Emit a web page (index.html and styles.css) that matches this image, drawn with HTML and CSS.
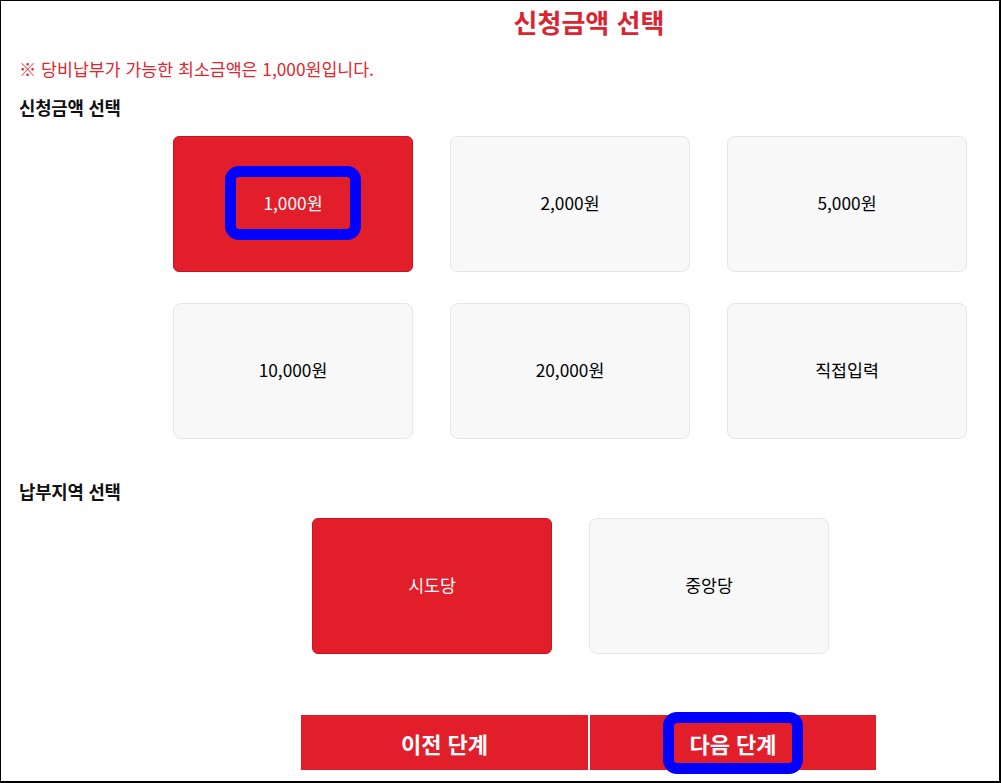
FILE: index.html
```html
<!DOCTYPE html>
<html lang="ko">
<head>
<meta charset="utf-8">
<title>신청금액 선택</title>
<link rel="stylesheet" href="styles.css">
</head>
<body>
<div class="frame">
  <h1 class="title">신청금액 선택</h1>
  <p class="notice">※ 당비납부가 가능한 최소금액은 1,000원입니다.</p>
  <h2 class="label">신청금액 선택</h2>
  <div class="amount-grid">
    <button class="opt opt-on"><span class="mark mark-amt">1,000원</span></button>
    <button class="opt">2,000원</button>
    <button class="opt">5,000원</button>
    <button class="opt">10,000원</button>
    <button class="opt">20,000원</button>
    <button class="opt">직접입력</button>
  </div>
  <h2 class="label label-region">납부지역 선택</h2>
  <div class="region-row">
    <button class="opt opt-on">시도당</button>
    <button class="opt">중앙당</button>
  </div>
  <div class="steps">
    <button class="step step-prev">이전 단계</button>
    <button class="step step-next"><span class="mark mark-next">다음 단계</span></button>
  </div>
</div>
</body>
</html>
```
FILE: styles.css
```css
html, body {
  margin: 0;
  padding: 0;
  background: #fff;
}
body {
  font-family: "Noto Sans CJK KR", "Noto Sans", sans-serif;
  color: #111;
}
.frame {
  box-sizing: border-box;
  width: 1001px;
  height: 783px;
  border: 1px solid #000;
  border-right-width: 2px;
  border-bottom-width: 2px;
  padding: 0 0 0 18px;
  overflow: hidden;
}
.title {
  margin: 0;
  padding-left: 160px;
  text-align: center;
  font-size: 26px;
  line-height: 42px;
  font-weight: 700;
  color: #d92530;
}
.notice {
  margin: 14px 0 0 0;
  font-size: 17.3px;
  line-height: 24px;
  color: #e0262f;
}
.label {
  margin: 14px 0 0 0;
  font-size: 17.8px;
  line-height: 24px;
  font-weight: 700;
  color: #111;
  letter-spacing: -0.2px;
}
.label-region {
  margin-top: 40px;
}
.amount-grid {
  margin: 17px 0 0 154px;
  display: grid;
  grid-template-columns: 240px 240px 240px;
  grid-auto-rows: 136px;
  column-gap: 37px;
  row-gap: 31px;
}
.opt {
  box-sizing: border-box;
  display: flex;
  align-items: center;
  justify-content: center;
  width: 240px;
  height: 136px;
  margin: 0;
  padding: 0 0 2px 0;
  border: 1px solid #e6e6e6;
  border-radius: 8px;
  background: #f8f8f8;
  font-family: inherit;
  font-size: 17.3px;
  font-weight: 400;
  line-height: 24px;
  color: #000;
}
.opt-on {
  background: #e31e2b;
  border-color: #c5161f;
  border-radius: 6px;
  color: #fff;
}
.region-row {
  margin: 15px 0 0 293px;
  display: flex;
  gap: 37px;
}
.steps {
  margin: 61px 0 0 282px;
  display: flex;
  gap: 2px;
}
.step {
  display: flex;
  align-items: center;
  justify-content: center;
  width: 287px;
  height: 55px;
  margin: 0;
  padding: 0;
  border: none;
  background: #e31e2b;
  color: #fff;
  font-family: inherit;
  font-size: 22px;
  font-weight: 700;
  line-height: 26px;
}
.step-next {
  width: 286px;
}
.mark {
  display: inline-block;
  border: 11px solid #0000ff;
  border-radius: 14px;
}
.mark-amt {
  padding: 14px 27px;
}
.mark-next {
  padding: 7px 15px;
}
```
